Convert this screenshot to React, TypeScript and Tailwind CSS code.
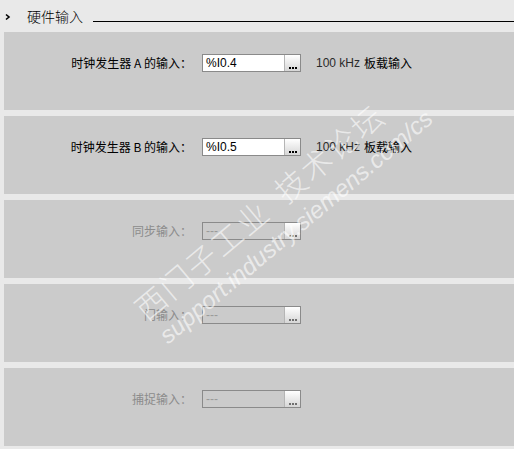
const rows = [
  { label: "时钟发生器 A 的输入：", value: "%I0.4", note: "100 kHz 板载输入", enabled: true },
  { label: "时钟发生器 B 的输入：", value: "%I0.5", note: "100 kHz 板载输入", enabled: true },
  { label: "同步输入：", value: "---", enabled: false },
  { label: "门输入：", value: "---", enabled: false },
  { label: "捕捉输入：", value: "---", enabled: false },
];

function BrowseButton({ enabled }: { enabled: boolean }) {
  const dot = enabled ? "bg-black" : "bg-[#6f6f6f]";
  return (
    <div className="w-[16px] h-full border-l border-[#b5b5b5] bg-gradient-to-b from-white to-[#d6d6d6] flex items-end justify-center gap-[1px] pb-[2px]">
      <span className={`w-[2px] h-[2px] ${dot}`} />
      <span className={`w-[2px] h-[2px] ${dot}`} />
      <span className={`w-[2px] h-[2px] ${dot}`} />
    </div>
  );
}

export default function App() {
  return (
    <div className="relative w-[514px] h-[449px] overflow-hidden bg-[#e9e9e9] font-['Noto_Sans_CJK_SC',sans-serif] text-[12px]">
      {/* header */}
      <div className="flex items-center h-[32px] pl-[5px]">
        <svg width="6" height="8" viewBox="0 0 6 8" className="mt-[1px]">
          <polyline points="1,1.5 4,4 1,6.5" fill="none" stroke="#000" strokeWidth="1.6" />
        </svg>
        <span className="ml-[16px] text-[14px] leading-none text-black font-light">硬件输入</span>
        <div className="ml-[10px] flex-1 h-px bg-black mt-[11px]" />
      </div>

      {/* panels */}
      <div className="flex flex-col gap-[6px] pl-[4px]">
        {rows.map((r) => (
          <div key={r.label} className="h-[78px] bg-[#cbcbcb] pt-[22px] flex items-start">
            <div
              className={`w-[188px] h-[18px] flex items-center justify-end ${r.enabled ? "text-black" : "text-[#8c8c8c]"}`}
            >
              {r.label}
            </div>
            <div
              className={`ml-[10px] w-[99px] h-[18px] border border-[#8a8a8a] flex ${r.enabled ? "bg-white" : "bg-[#cbcbcb]"}`}
            >
              <div
                className={`flex-1 flex items-center pl-[3px] font-['Liberation_Sans',sans-serif] ${r.enabled ? "text-black" : "text-[#9a9a9a]"}`}
              >
                {r.value}
              </div>
              <BrowseButton enabled={r.enabled} />
            </div>
            {r.note && (
              <div className="ml-[15px] h-[18px] flex items-center text-black">
                <span className="font-['Liberation_Sans',sans-serif] text-[#2a2a2a]">100 kHz</span>
                <span className="ml-[4px]">板载输入</span>
              </div>
            )}
          </div>
        ))}
      </div>

      {/* watermark */}
      <div className="absolute left-[128px] top-[300px] origin-top-left -rotate-[40deg] pointer-events-none select-none text-white/60 whitespace-nowrap">
        <div className="text-[31px] leading-none tracking-[2px] font-light">西门子工业&nbsp;&nbsp;技术论坛</div>
        <div className="mt-[9px] ml-[2px] text-[24px] leading-none italic font-['Liberation_Sans',sans-serif]">
          support.industry.siemens.com/cs
        </div>
      </div>
    </div>
  );
}
